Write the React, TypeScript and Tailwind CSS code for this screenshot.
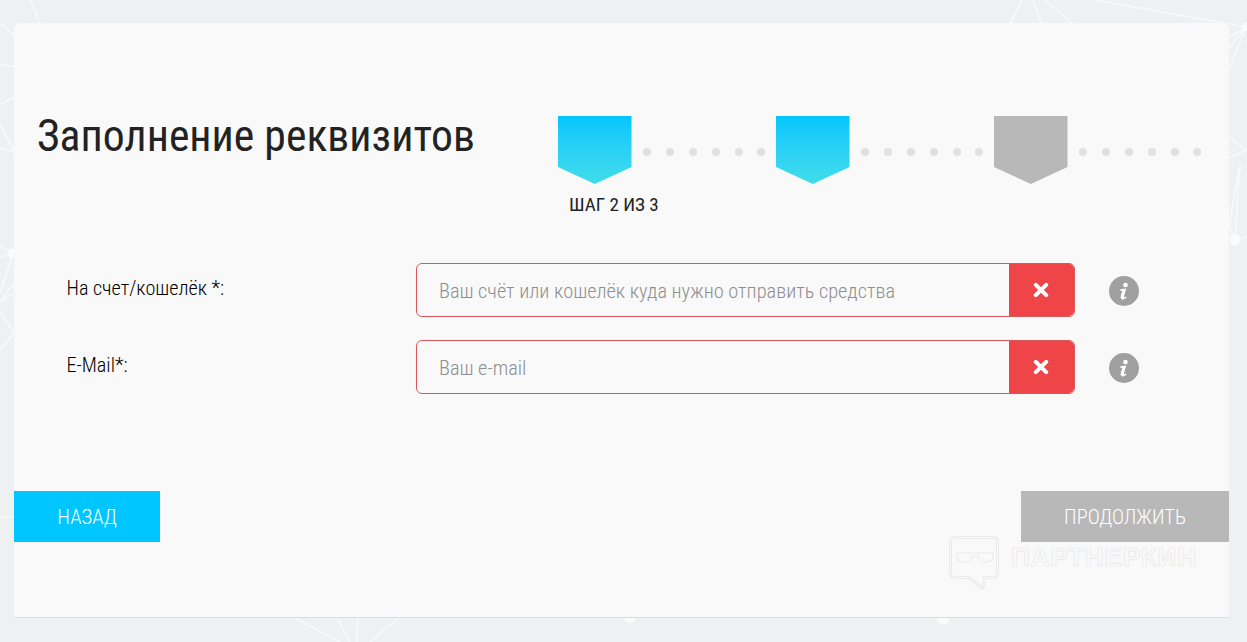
const F = { fontFamily: "Roboto, sans-serif" };
function Bg() {
  const segs = [
    "M1095 0 L1246 27", "M1010 23 L1022 0", "M1041 23 L1033 0", "M1072 23 L1045 0",
    "M1229 38 L1246 27", "M1229 48 L1246 27", "M1229 70 L1246 27", "M1229 138 L1247 150", "M1229 158 L1247 150",
    "M1229 225 L1240 165", "M1235 240 L1240 165", "M1235 240 L1247 237", "M1235 240 L1229 225",
    "M30 0 L40 23", "M0 23 L14 35", "M0 65 L14 66", "M0 105 L14 97", "M0 125 L14 150", "M0 148 L14 152",
    "M0 245 L12 253", "M0 257 L12 253", "M0 293 L12 257", "M0 302 L14 283", "M0 302 L14 293", "M0 312 L14 333", "M0 350 L14 333", "M0 517 L14 517",
    "M295 618 L340 642", "M337 618 L350 642", "M358 618 L357 642", "M398 618 L370 642",
  ];
  return (
    <svg className="absolute inset-0" width="1247" height="642" fill="none" stroke="#f8fafa" strokeWidth="1.5">
      {segs.map((d, i) => <path key={i} d={d} />)}
      <circle cx="630" cy="617" r="6" fill="#fafbfb" stroke="none" />
      <circle cx="943" cy="619" r="6" fill="#fafbfb" stroke="none" />
      <circle cx="1235" cy="240" r="5.5" fill="#fafbfb" stroke="none" />
      <circle cx="1246" cy="27" r="4" fill="#fafbfb" stroke="none" />
      <circle cx="12" cy="253" r="4.5" fill="#fafbfb" stroke="none" />
    </svg>
  );
}
function Pent({ gray }: { gray?: boolean }) {
  return (
    <div
      className={"w-[73.5px] h-[68px] shrink-0 [clip-path:polygon(0_0,100%_0,100%_75%,50%_100%,0_75%)] " + (gray ? "bg-[#b8b8b8]" : "bg-gradient-to-b from-[#00c6ff] to-[#40dcea]")}
    />
  );
}
function Dots() {
  return (
    <div className="w-[144.5px] flex justify-between items-center pl-[11.5px] pr-[10.5px] h-[68px] pt-[3px]">
      {[0, 1, 2, 3, 4, 5].map((i) => <span key={i} className="w-[8px] h-[8px] rounded-full bg-[#e0e0e0]" />)}
    </div>
  );
}
function Info() {
  return (
    <svg className="ml-[33.5px] mt-[13px]" width="30" height="30" viewBox="0 0 30 30">
      <circle cx="15" cy="15" r="15" fill="#a0a0a0" />
      <circle cx="16.5" cy="9" r="2.3" fill="#fff" />
      <path d="M11.5 13.2 L17.2 12.6 L15 20.2 Q14.6 22 16.8 20.4 L17.6 21.4 Q14.8 24 12.6 23.2 Q11 22.4 11.8 19.8 L13.3 15 L11.4 15 Z" fill="#fff" />
    </svg>
  );
}
function Field({ label, ph }: { label: string; ph: string }) {
  return (
    <div className="flex items-start h-[54px]">
      <div className="w-[351px] pl-[1.5px] pt-[13px] text-[20.2px] leading-[24px] font-light text-[#000] font-stretch-[75%]">{label}</div>
      <div className="w-[659px] h-[54px] flex border border-[#d9575a] rounded-[6px] overflow-hidden">
        <div className="flex-1 pl-[22px] pt-[2px] flex items-center text-[20.37px] leading-[24px] font-light text-[#8f8f8f] font-stretch-[75%]">{ph}</div>
        <div className="w-[66px] -m-[1px] pr-[2px] bg-[#ef4549] rounded-r-[6px] flex items-center justify-center">
          <svg width="16" height="16" viewBox="0 0 16 16"><path d="M2.8 2.8 L13.2 13.2 M13.2 2.8 L2.8 13.2" stroke="#fff" strokeWidth="4" strokeLinecap="round" /></svg>
        </div>
      </div>
      <Info />
    </div>
  );
}
function Logo() {
  const bubble = "M955 537.5 H993 Q997.5 537.5 997.5 542 V573 Q997.5 577.5 993 577.5 H984 V586 Q984 590 980.5 587 L969 577.5 H955 Q950.5 577.5 950.5 573 V542 Q950.5 537.5 955 537.5 Z";
  const glasses = "M957 553 H993 V556 Q993 562 987 562 H983 Q979 562 978 556 H972 Q971 562 967 562 H963 Q957 562 957 556 Z";
  return (
    <>
      <svg className="absolute left-0 top-0" width="1247" height="642" fill="none">
        <path d={bubble} stroke="#e8e8e8" strokeWidth="2.6" />
        <path d={bubble} stroke="#f9f9f9" strokeWidth="1" />
        <path d={glasses} stroke="#ececec" strokeWidth="1.2" />
      </svg>
      <span className="absolute left-[1011px] top-[540px] text-[26.4px] leading-[34px] font-bold tracking-[0.6px] text-[#f9f9f9] [-webkit-text-stroke:0.6px_#e6e6e6]" style={{ fontFamily: "'Liberation Sans', sans-serif" }}>ПАРТНЕРКИН</span>
    </>
  );
}
export default function App() {
  return (
    <div className="relative w-[1247px] h-[642px] overflow-hidden bg-[#eef1f2]" style={F}>
      <Bg />
      <div className="relative ml-[14px] top-[23px] w-[1215px] h-[595px] bg-[#f9f9f9] rounded-t-[6px] border-b border-[#dcdcdc]">
        <div className="flex pt-[93px] h-[240px]">
          <h1 className="w-[544px] pl-[23px] text-[43.7px] leading-[40px] text-[#222] font-normal font-stretch-[75%]">Заполнение реквизитов</h1>
          <div className="relative flex">
            <Pent /><Dots /><Pent /><Dots /><Pent gray /><Dots />
            <div className="absolute left-[11px] top-[78px] text-[19.1px] leading-[22px] font-normal text-[#222] font-stretch-[75%]">ШАГ 2 ИЗ 3</div>
          </div>
        </div>
        <div className="flex flex-col gap-[23px] pl-[51px]">
          <Field label="На счет/кошелёк *:" ph="Ваш счёт или кошелёк куда нужно отправить средства" />
          <Field label="E-Mail*:" ph="Ваш e-mail" />
        </div>
        <div className="flex justify-between mt-[97px]">
          <div className="w-[146px] h-[51px] pt-[2px] bg-[#00c6ff] text-white text-[20.6px] font-light flex items-center justify-center font-stretch-[75%]">НАЗАД</div>
          <div className="w-[208px] h-[51px] pt-[2px] bg-[#b8b8b8] text-white text-[20.4px] font-light flex items-center justify-center font-stretch-[75%]">ПРОДОЛЖИТЬ</div>
        </div>
      </div>
      <Logo />
    </div>
  );
}
